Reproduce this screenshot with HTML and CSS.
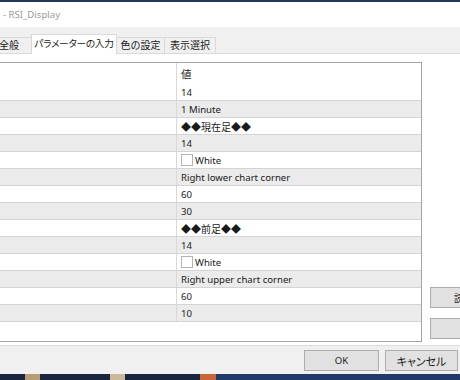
FILE: index.html
```html
<!DOCTYPE html>
<html lang="ja">
<head>
<meta charset="utf-8">
<title>RSI_Display</title>
<link rel="stylesheet" href="styles.css">
</head>
<body>
<div class="topline"></div>
<div class="titlebar">- RSI_Display</div>
<div class="dialog">
  <div class="tabs">
    <div class="tab first">全般</div>
    <div class="tab active">パラメーターの入力</div>
    <div class="tab">色の設定</div>
    <div class="tab">表示選択</div>
  </div>
  <div class="page">
    <div class="list">
      <div class="row head"><div class="c1"></div><div class="c2 jp">値</div></div>
      <div class="row"><div class="c1"></div><div class="c2">14</div></div>
      <div class="row alt"><div class="c1"></div><div class="c2">1 Minute</div></div>
      <div class="row"><div class="c1"></div><div class="c2 jp">◆◆現在足◆◆</div></div>
      <div class="row alt"><div class="c1"></div><div class="c2">14</div></div>
      <div class="row"><div class="c1"></div><div class="c2"><span class="check"></span>White</div></div>
      <div class="row alt"><div class="c1"></div><div class="c2">Right lower chart corner</div></div>
      <div class="row"><div class="c1"></div><div class="c2">60</div></div>
      <div class="row alt"><div class="c1"></div><div class="c2">30</div></div>
      <div class="row"><div class="c1"></div><div class="c2 jp">◆◆前足◆◆</div></div>
      <div class="row alt"><div class="c1"></div><div class="c2">14</div></div>
      <div class="row"><div class="c1"></div><div class="c2"><span class="check"></span>White</div></div>
      <div class="row alt"><div class="c1"></div><div class="c2">Right upper chart corner</div></div>
      <div class="row"><div class="c1"></div><div class="c2">60</div></div>
      <div class="row alt"><div class="c1"></div><div class="c2">10</div></div>
    </div>
    <div class="side">
      <button class="btn side-btn">読み込み</button>
      <button class="btn side-btn">保存</button>
    </div>
  </div>
  <div class="footer">
    <button class="btn ok">OK</button>
    <button class="btn cancel">キャンセル</button>
  </div>
</div>
<div class="taskbar">
  <span class="tb dark" style="width:25px"></span>
  <span class="tb tan" style="width:15px"></span>
  <span class="tb dark" style="width:70px"></span>
  <span class="tb light" style="width:15px"></span>
  <span class="tb dark" style="width:75px"></span>
  <span class="tb orange" style="width:16px"></span>
  <span class="tb navy" style="width:244px"></span>
</div>
</body>
</html>
```
FILE: styles.css
```css
html, body {
  margin: 0;
  padding: 0;
}
body {
  width: 460px;
  height: 380px;
  overflow: hidden;
  background: #f0f0f0;
  font-family: "Noto Sans", "Noto Sans CJK JP", sans-serif;
  font-size: 9.6px;
  color: #1a1a1a;
}
.topline {
  height: 2px;
  background: #24395a;
}
.titlebar {
  height: 25px;
  line-height: 25px;
  background: #ffffff;
  color: #9a9a9a;
  padding-left: 3px;
  white-space: nowrap;
}
.dialog {
  display: flex;
  flex-direction: column;
  background: #f0f0f0;
}
.tabs {
  height: 26px;
  display: flex;
  align-items: flex-end;
  font-family: "Noto Sans CJK JP", sans-serif;
  font-size: 10px;
}
.tab {
  box-sizing: border-box;
  height: 16px;
  line-height: 14px;
  border: 1px solid #d9d9d9;
  border-bottom: none;
  background: #f0f0f0;
  text-align: center;
  white-space: nowrap;
  margin-left: -1px;
}
.tab.first {
  width: 46px;
  margin-left: -14px;
}
.tab.active {
  width: 86px;
  height: 20px;
  line-height: 17px;
  background: #ffffff;
  margin-bottom: -1px;
  position: relative;
  z-index: 1;
  font-size: 9.6px;
  font-feature-settings: "palt";
  letter-spacing: -0.2px;
}
.tab:nth-child(3) {
  width: 49px;
}
.tab:nth-child(4) {
  width: 52px;
}
.page {
  box-sizing: border-box;
  height: 293px;
  display: flex;
  gap: 8px;
  background: #ffffff;
  border-top: 1px solid #d9d9d9;
  border-bottom: 1px solid #dcdcdc;
  padding: 8px 0 3px 0;
}
.list {
  flex: none;
  box-sizing: border-box;
  width: 482px;
  height: 280px;
  margin-left: -60px;
  border: 1px solid #a5a5a5;
  background: #ffffff;
  display: flex;
  flex-direction: column;
}
.row {
  box-sizing: border-box;
  height: 17px;
  display: flex;
  border-bottom: 1px solid #d4d4d4;
  background: #ffffff;
}
.row.alt {
  background: #ebebeb;
}
.row.head {
  height: 21px;
  border-bottom: none;
}
.c1 {
  box-sizing: border-box;
  width: 236px;
  border-right: 1px solid #d9d9d9;
  flex: none;
}
.c2 {
  flex: 1;
  padding-left: 4px;
  display: flex;
  align-items: center;
  white-space: nowrap;
}
.jp {
  font-family: "Noto Sans CJK JP", sans-serif;
  font-size: 10px;
}
.head .c2 {
  font-size: 10.5px;
}
.check {
  box-sizing: border-box;
  width: 12px;
  height: 12px;
  border: 1px solid #b4b4b4;
  background: #ffffff;
  margin-right: 2px;
}
.side {
  display: flex;
  flex-direction: column;
  justify-content: flex-end;
  gap: 10px;
  padding-bottom: 3px;
}
.btn {
  box-sizing: border-box;
  height: 21px;
  border: 1px solid #adadad;
  background: #e1e1e1;
  color: #1a1a1a;
  font-family: "Noto Sans", "Noto Sans CJK JP", sans-serif;
  font-size: 9.6px;
  padding: 0;
  margin: 0;
  white-space: nowrap;
}
.side-btn {
  width: 88px;
  font-family: "Noto Sans CJK JP", sans-serif;
  font-size: 10px;
}
.footer {
  height: 28px;
  box-sizing: border-box;
  display: flex;
  justify-content: flex-end;
  align-items: flex-start;
  gap: 6px;
  padding: 4px 2px 0 0;
}
.ok {
  width: 75px;
}
.cancel {
  width: 73px;
  font-family: "Noto Sans CJK JP", sans-serif;
  font-size: 11px;
  font-feature-settings: "palt";
}
.taskbar {
  height: 6px;
  display: flex;
  background: #1b2b45;
}
.tb {
  display: block;
  height: 6px;
}
.tb.dark { background: #1a2640; }
.tb.tan { background: #b89c74; }
.tb.light { background: #cbb99a; }
.tb.orange { background: #c8663a; }
.tb.navy { background: #1f3a66; }
```
